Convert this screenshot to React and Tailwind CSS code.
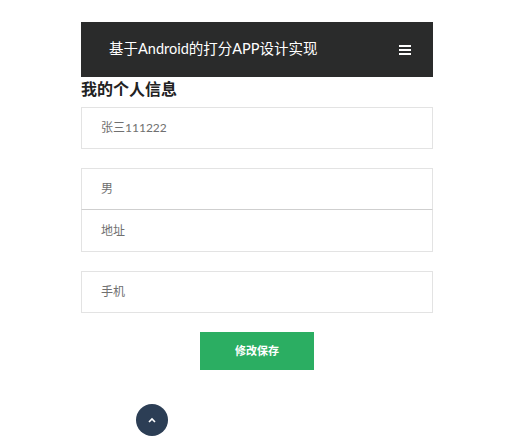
import React from 'react';

const font = { fontFamily: '"Lato", "Noto Sans CJK SC", sans-serif' };

const Field = ({ value, className = '' }) => (
  <div className={`h-[42px] flex items-center pl-[19px] bg-white border border-[#e3e3e3] text-[12px] text-[#707070] ${className}`}>
    {value}
  </div>
);

const App = () => {
  return (
    <div className="w-[517px] h-[447px] bg-white overflow-hidden" style={font}>
      <div className="ml-[81px] w-[352px] pt-[22px]">
        {/* Header */}
        <header className="h-[55px] bg-[#2a2b2b] flex items-center justify-between pl-[28px] pr-[22px]">
          <h1 className="text-white text-[14.5px] leading-none">基于Android的打分APP设计实现</h1>
          <div className="flex flex-col gap-[2px] w-[12px]">
            <span className="h-[2px] bg-white" />
            <span className="h-[2px] bg-white" />
            <span className="h-[2px] bg-white" />
          </div>
        </header>

        <h2 className="text-[16px] font-bold text-[#222] leading-[22px] mt-[1px] mb-[7px]">我的个人信息</h2>

        <Field value="张三111222" />
        <Field value="男" className="mt-[19px] border-b-[#cfcfcf]" />
        <Field value="地址" className="border-t-0" />
        <Field value="手机" className="mt-[19px]" />

        <div className="flex justify-center mt-[19px]">
          <button className="w-[114px] h-[38px] bg-[#2bae62] text-white text-[11px] font-bold">修改保存</button>
        </div>

        <div className="mt-[34px] ml-[55px] w-[32px] h-[32px] rounded-full bg-[#2c3e55] flex items-center justify-center">
          <svg width="8" height="6" viewBox="0 0 8 6" fill="none">
            <path d="M1 5 L4 2 L7 5" stroke="white" strokeWidth="1.6" />
          </svg>
        </div>
      </div>
    </div>
  );
};

export default App;
